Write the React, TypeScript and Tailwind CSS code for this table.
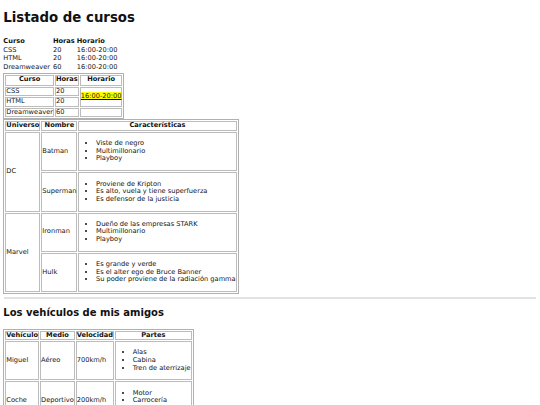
import React from 'react';

const cursos = [
  { curso: 'CSS', horas: '20', horario: '16:00-20:00' },
  { curso: 'HTML', horas: '20', horario: '16:00-20:00' },
  { curso: 'Dreamweaver', horas: '60', horario: '16:00-20:00' },
];

const heroes = [
  { universo: 'DC', nombre: 'Batman', items: ['Viste de negro', 'Multimillonario', 'Playboy'] },
  { universo: 'DC', nombre: 'Superman', items: ['Proviene de Kripton', 'Es alto, vuela y tiene superfuerza', 'Es defensor de la justicia'] },
  { universo: 'Marvel', nombre: 'Ironman', items: ['Dueño de las empresas STARK', 'Multimillonario', 'Playboy'] },
  { universo: 'Marvel', nombre: 'Hulk', items: ['Es grande y verde', 'Es el alter ego de Bruce Banner', 'Su poder proviene de la radiación gamma'] },
];

const vehiculos = [
  { vehiculo: 'Miguel', medio: 'Aéreo', velocidad: '700km/h', partes: ['Alas', 'Cabina', 'Tren de aterrizaje'] },
  { vehiculo: 'Coche', medio: 'Deportivo', velocidad: '200km/h', partes: ['Motor', 'Carrocería', 'Caja de cambios'] },
];

// bordered table look (like border="1")
const tbl = 'border-separate border-spacing-[1px] border border-[#b0b0b0] text-left';
const cell = 'border border-[#bcbcbc] p-0 align-middle';
const head = 'border border-[#bcbcbc] p-0 font-bold text-center';

function Lista({ items }: { items: string[] }) {
  return (
    <ul className="list-disc pl-[16.6px] my-[7.25px]">
      {items.map((it) => (
        <li key={it}>{it}</li>
      ))}
    </ul>
  );
}

export default function App() {
  return (
    <div className="bg-white text-[#111] font-['DejaVu_Sans',Verdana,sans-serif] text-[6.65px] leading-[7.6px] px-[3.3px] pt-px h-[405px] overflow-hidden">
      <h1 className="text-[13.3px] font-bold leading-[15.2px] mt-[9px] mb-[12.7px]">Listado de cursos</h1>

      {/* tabla sin bordes */}
      <table className="border-separate border-spacing-0 text-left">
        <thead>
          <tr>
            <th className="font-bold p-0 pr-[3px] pb-[1.1px]">Curso</th>
            <th className="font-bold p-0 pr-[2px] pb-[1.1px]">Horas</th>
            <th className="font-bold p-0 pb-[1.1px]">Horario</th>
          </tr>
        </thead>
        <tbody>
          {cursos.map((c) => (
            <tr key={c.curso}>
              <td className="p-0 pr-[3px] pb-[1.1px]">{c.curso}</td>
              <td className="p-0 pr-[2px] pb-[1.1px]">{c.horas}</td>
              <td className="p-0 pb-[1.1px]">{c.horario}</td>
            </tr>
          ))}
        </tbody>
      </table>

      {/* tabla con rowspan */}
      <table className={tbl}>
        <thead>
          <tr>
            <th className={head + ' py-[0.7px]'}>Curso</th>
            <th className={head + ' py-[0.7px]'}>Horas</th>
            <th className={head + ' py-[0.7px]'}>Horario</th>
          </tr>
        </thead>
        <tbody>
          <tr>
            <td className={cell}>CSS</td>
            <td className={cell}>20</td>
            <td className={cell} rowSpan={2}>
              <span className="bg-[#ffff00] underline">16:00-20:00</span>
            </td>
          </tr>
          <tr>
            <td className={cell}>HTML</td>
            <td className={cell}>20</td>
          </tr>
          <tr>
            <td className={cell}>Dreamweaver</td>
            <td className={cell}>60</td>
            <td className={cell}></td>
          </tr>
        </tbody>
      </table>

      {/* superheroes */}
      <table className={tbl}>
        <thead>
          <tr>
            <th className={head}>Universo</th>
            <th className={head}>Nombre</th>
            <th className={head}>Características</th>
          </tr>
        </thead>
        <tbody>
          {heroes.map((h, i) => (
            <tr key={h.nombre}>
              {i % 2 === 0 && (
                <td className={cell} rowSpan={2}>
                  {h.universo}
                </td>
              )}
              <td className={cell}>{h.nombre}</td>
              <td className={cell}>
                <Lista items={h.items} />
              </td>
            </tr>
          ))}
        </tbody>
      </table>

      <hr className="border-0 h-[2px] bg-[#e2e2e2] mt-[3px] mb-[6px] mx-px" />

      <h2 className="text-[10px] font-bold leading-[11.5px] mt-[8px] mb-[10px]">Los vehículos de mis amigos</h2>

      <table className={tbl}>
        <thead>
          <tr>
            <th className={head}>Vehículo</th>
            <th className={head}>Medio</th>
            <th className={head}>Velocidad</th>
            <th className={head}>Partes</th>
          </tr>
        </thead>
        <tbody>
          {vehiculos.map((v) => (
            <tr key={v.vehiculo}>
              <td className={cell}>{v.vehiculo}</td>
              <td className={cell}>{v.medio}</td>
              <td className={cell}>{v.velocidad}</td>
              <td className={cell}>
                <Lista items={v.partes} />
              </td>
            </tr>
          ))}
        </tbody>
      </table>
    </div>
  );
}
